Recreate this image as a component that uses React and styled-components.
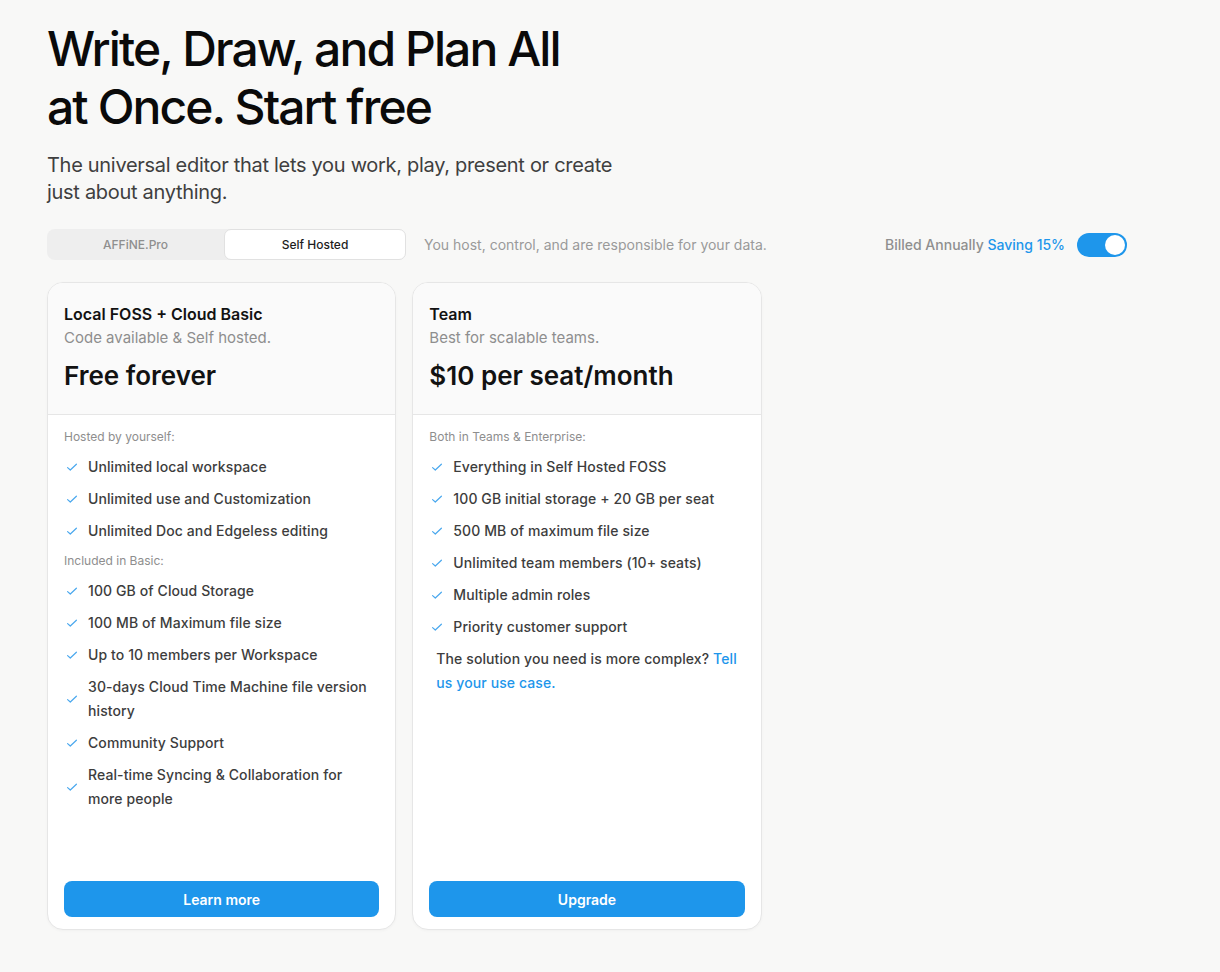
import styled, { createGlobalStyle } from "styled-components";

const GlobalStyle = createGlobalStyle`
  * { box-sizing: border-box; }
  html, body {
    margin: 0;
    padding: 0;
    background: #f8f8f7;
    font-family: Inter, "Noto Sans", sans-serif;
    color: #121212;
  }
`;

const Page = styled.div`
  width: 1080px;
  margin-left: 47px;
  padding-top: 20px;
  padding-bottom: 40px;
`;

const Title = styled.h1`
  margin: 0;
  font-size: 48px;
  line-height: 57.6px;
  font-weight: 500;
  letter-spacing: -0.04em;
  color: #0a0a0a;
`;

const Subtitle = styled.p`
  margin: 17px 0 0;
  width: 600px;
  font-size: 20px;
  line-height: 27px;
  letter-spacing: -0.015em;
  color: #3f3f3f;
`;

const Controls = styled.div`
  display: flex;
  align-items: center;
  justify-content: space-between;
  margin-top: 23px;
  height: 31px;
`;

const Group = styled.div`
  display: flex;
  align-items: center;
  gap: ${(p) => p.$gap || 12}px;
`;

const Segmented = styled.div`
  display: grid;
  grid-template-columns: 177px 1fr;
  width: 359px;
  height: 31px;
  background: #eeeeee;
  border-radius: 8px;
`;

const Segment = styled.button`
  border: 1px solid ${(p) => (p.$active ? "#e1e1e1" : "transparent")};
  background: ${(p) => (p.$active ? "#ffffff" : "transparent")};
  border-radius: 7px;
  font-family: inherit;
  font-size: 12px;
  font-weight: 500;
  color: ${(p) => (p.$active ? "#1d1d1d" : "#8f8f8f")};
  cursor: pointer;
`;

const Hint = styled.span`
  font-size: 14px;
  color: #9a9a9a;
  margin-left: 6px;
`;

const Billing = styled.span`
  font-size: 14px;
  font-weight: 500;
  color: #8f8f8f;
`;

const Saving = styled.span`
  color: #1e96eb;
`;

const Toggle = styled.div`
  width: 50px;
  height: 24px;
  border-radius: 12px;
  background: #1e96eb;
  display: flex;
  align-items: center;
  justify-content: flex-end;
  padding: 0 2px;
`;

const Knob = styled.div`
  width: 20px;
  height: 20px;
  border-radius: 50%;
  background: #ffffff;
`;

const Cards = styled.div`
  display: grid;
  grid-template-columns: repeat(3, 1fr);
  gap: 16px;
  margin-top: 22px;
`;

const Card = styled.div`
  display: flex;
  flex-direction: column;
  min-height: 648px;
  background: #ffffff;
  border: 1px solid #e6e6e6;
  border-radius: 16px;
  overflow: hidden;
  box-shadow: 0 1px 3px rgba(0, 0, 0, 0.03);
`;

const CardHead = styled.div`
  padding: 19px 16px 20px;
  background: #fafafa;
  border-bottom: 1px solid #e6e6e6;
`;

const PlanName = styled.div`
  font-size: 16px;
  line-height: 24px;
  font-weight: 600;
  color: #121212;
`;

const PlanNote = styled.div`
  font-size: 15px;
  line-height: 24px;
  color: #8e8e8e;
`;

const Price = styled.div`
  margin-top: 8px;
  font-size: 26px;
  line-height: 36px;
  font-weight: 600;
  color: #121212;
`;

const CardBody = styled.div`
  flex: 1;
  display: flex;
  flex-direction: column;
  gap: 8px;
  padding: 12px 16px 12px;
`;

const Section = styled.div`
  font-size: 12px;
  line-height: 20px;
  color: #8e8e8e;
`;

const Item = styled.div`
  display: flex;
  align-items: center;
  gap: 8px;
  padding-right: 8px;
  font-size: 14px;
  line-height: 24px;
  font-weight: 500;
  letter-spacing: 0.1px;
  color: #3d3d3d;
`;

const CheckBox = styled.span`
  flex: none;
  width: 16px;
  height: 16px;
  display: flex;
`;

const Note = styled.p`
  margin: 0;
  padding: 0 6px 0 7px;
  font-size: 14px;
  line-height: 24px;
  font-weight: 500;
  letter-spacing: 0.1px;
  color: #3d3d3d;
`;

const Link = styled.a`
  color: #1e96eb;
  text-decoration: none;
`;

const Action = styled.button`
  margin-top: auto;
  height: 36px;
  width: 100%;
  border: none;
  border-radius: 8px;
  background: #1e96eb;
  color: #ffffff;
  font-family: inherit;
  font-size: 14px;
  font-weight: 600;
  cursor: pointer;
`;

function Check() {
  return (
    <CheckBox>
      <svg width="16" height="16" viewBox="0 0 16 16" fill="none">
        <path
          d="M3.6 8.6 L6.3 11 L12.4 5.2"
          stroke="#4aa8ee"
          strokeWidth="1.2"
          strokeLinecap="round"
          strokeLinejoin="round"
        />
      </svg>
    </CheckBox>
  );
}

const plans = [
  {
    name: "Local FOSS + Cloud Basic",
    note: "Code available & Self hosted.",
    price: "Free forever",
    action: "Learn more",
    groups: [
      {
        title: "Hosted by yourself:",
        items: [
          "Unlimited local workspace",
          "Unlimited use and Customization",
          "Unlimited Doc and Edgeless editing",
        ],
      },
      {
        title: "Included in Basic:",
        items: [
          "100 GB of Cloud Storage",
          "100 MB of Maximum file size",
          "Up to 10 members per Workspace",
          "30-days Cloud Time Machine file version history",
          "Community Support",
          "Real-time Syncing & Collaboration for more people",
        ],
      },
    ],
  },
  {
    name: "Team",
    note: "Best for scalable teams.",
    price: "$10 per seat/month",
    action: "Upgrade",
    contact: true,
    groups: [
      {
        title: "Both in Teams & Enterprise:",
        items: [
          "Everything in Self Hosted FOSS",
          "100 GB initial storage + 20 GB per seat",
          "500 MB of maximum file size",
          "Unlimited team members (10+ seats)",
          "Multiple admin roles",
          "Priority customer support",
        ],
      },
    ],
  },
];

export default function App() {
  return (
    <>
      <GlobalStyle />
      <Page>
        <Title>
          Write, Draw, and Plan All
          <br />
          at Once. Start free
        </Title>
        <Subtitle>
          The universal editor that lets you work, play, present or create
          just about anything.
        </Subtitle>

        <Controls>
          <Group $gap={12}>
            <Segmented>
              <Segment>AFFiNE.Pro</Segment>
              <Segment $active>Self Hosted</Segment>
            </Segmented>
            <Hint>You host, control, and are responsible for your data.</Hint>
          </Group>
          <Group $gap={12}>
            <Billing>
              Billed Annually <Saving>Saving 15%</Saving>
            </Billing>
            <Toggle>
              <Knob />
            </Toggle>
          </Group>
        </Controls>

        <Cards>
          {plans.map((plan) => (
            <Card key={plan.name}>
              <CardHead>
                <PlanName>{plan.name}</PlanName>
                <PlanNote>{plan.note}</PlanNote>
                <Price>{plan.price}</Price>
              </CardHead>
              <CardBody>
                {plan.groups.map((group) => [
                  <Section key={group.title}>{group.title}</Section>,
                  ...group.items.map((item) => (
                    <Item key={item}>
                      <Check />
                      <span>{item}</span>
                    </Item>
                  )),
                ])}
                {plan.contact && (
                  <Note>
                    The solution you need is more complex?{" "}
                    <Link href="#">Tell us your use case.</Link>
                  </Note>
                )}
                <Action>{plan.action}</Action>
              </CardBody>
            </Card>
          ))}
        </Cards>
      </Page>
    </>
  );
}
